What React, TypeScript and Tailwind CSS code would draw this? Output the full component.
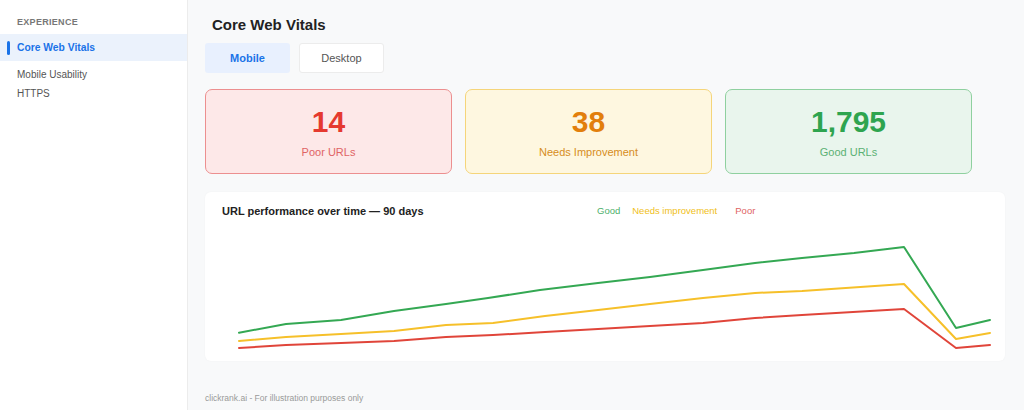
import React from "react";

const series = [
  {
    color: "#34a853",
    points: "17,106.7 64,98 119,94 172,85 224,78 266,72 318,64 376,57 428,51 481,44 533,37 580,32 632,27 682,21 734,102 768,94",
  },
  {
    color: "#f6c02a",
    points: "17,115 64,111 119,108 172,105 224,99 271,97 323,90 376,84 428,78 481,72 533,67 580,65 682,58 734,113 768,107",
  },
  {
    color: "#e0453a",
    points: "17,122 64,119 119,117 172,115 224,111 271,109 323,106 376,103 428,100 481,97 533,92 580,89 682,83 734,122 768,119",
  },
];

const StatCard = ({
  value,
  label,
  box,
  num,
  text,
}: {
  value: string;
  label: string;
  box: string;
  num: string;
  text: string;
}) => (
  <div className={`flex h-[85px] flex-col items-center justify-center rounded-[7px] border ${box}`}>
    <div className={`mt-[1px] text-[30px] font-bold leading-[32px] ${num}`}>{value}</div>
    <div className={`mt-[7px] text-[11px] leading-[14px] ${text}`}>{label}</div>
  </div>
);

export default function App() {
  return (
    <div
      className="flex h-[410px] w-[1024px] overflow-hidden"
      style={{ fontFamily: '"Liberation Sans", Arial, sans-serif' }}
    >
      {/* sidebar */}
      <aside className="w-[188px] shrink-0 border-r border-[#ececec] bg-white pt-[17px]">
        <div className="pl-[17px] text-[9px] font-semibold leading-[11px] tracking-[0.3px] text-[#777]">
          EXPERIENCE
        </div>
        <div className="mt-[6px] flex h-[27px] items-center bg-[#ebf2fc]">
          <span className="ml-[7px] h-[14px] w-[3px] rounded-sm bg-[#1a73e8]" />
          <span className="ml-[7px] text-[10.3px] font-bold text-[#1a73e8]">Core Web Vitals</span>
        </div>
        <div className="mt-[7px] pl-[17px] text-[10px] leading-[13px] text-[#555]">Mobile Usability</div>
        <div className="mt-[6px] pl-[17px] text-[10px] leading-[13px] text-[#555]">HTTPS</div>
      </aside>

      {/* main */}
      <main className="flex-1 bg-[#f8f9fa] pl-[17px] pr-[19px] pt-[16px]">
        <h1 className="pl-[7px] text-[15px] font-bold leading-[18px] text-[#222]">Core Web Vitals</h1>

        <div className="mt-[9px] flex gap-[9px]">
          <button className="h-[30px] w-[85px] rounded-[3px] bg-[#e8f0fe] text-[11px] font-bold text-[#1a73e8]">
            Mobile
          </button>
          <button className="h-[30px] w-[85px] rounded-[3px] border border-[#ececec] bg-white text-[11px] text-[#555]">
            Desktop
          </button>
        </div>

        <div className="mt-[16px] grid w-[767px] grid-cols-3 gap-[13px]">
          <StatCard
            value="14"
            label="Poor URLs"
            box="border-[#ec8f8f] bg-[#fde8e8]"
            num="text-[#e5392f]"
            text="text-[#e06464]"
          />
          <StatCard
            value="38"
            label="Needs Improvement"
            box="border-[#f5d57a] bg-[#fef7e0]"
            num="text-[#e27f0c]"
            text="text-[#d68d1c]"
          />
          <StatCard
            value="1,795"
            label="Good URLs"
            box="border-[#8fd09f] bg-[#e9f5ed]"
            num="text-[#2ea44f]"
            text="text-[#5bb174]"
          />
        </div>

        <section className="mt-[18px] h-[169px] rounded-[6px] bg-white pl-[17px] pt-[12px] shadow-[0_0_2px_rgba(0,0,0,0.04)]">
          <div className="flex items-center">
            <div className="w-[375px] text-[11px] font-bold leading-[14px] text-[#222]">
              URL performance over time — 90 days
            </div>
            <span className="text-[9.5px] text-[#4caf6a]">Good</span>
            <span className="ml-[12px] text-[9.5px] text-[#f0c020]">Needs improvement</span>
            <span className="ml-[18px] text-[9.5px] text-[#e06464]">Poor</span>
          </div>
          <svg width="770" height="130" viewBox="0 0 770 130" className="mt-[8px] block overflow-visible">
            {series.map((s) => (
              <polyline
                key={s.color}
                points={s.points}
                fill="none"
                stroke={s.color}
                strokeWidth="2"
                strokeLinejoin="round"
                strokeLinecap="round"
              />
            ))}
          </svg>
        </section>

        <div className="mt-[31px] text-[8.5px] leading-[12px] text-[#999]">
          clickrank.ai - For illustration purposes only
        </div>
      </main>
    </div>
  );
}
